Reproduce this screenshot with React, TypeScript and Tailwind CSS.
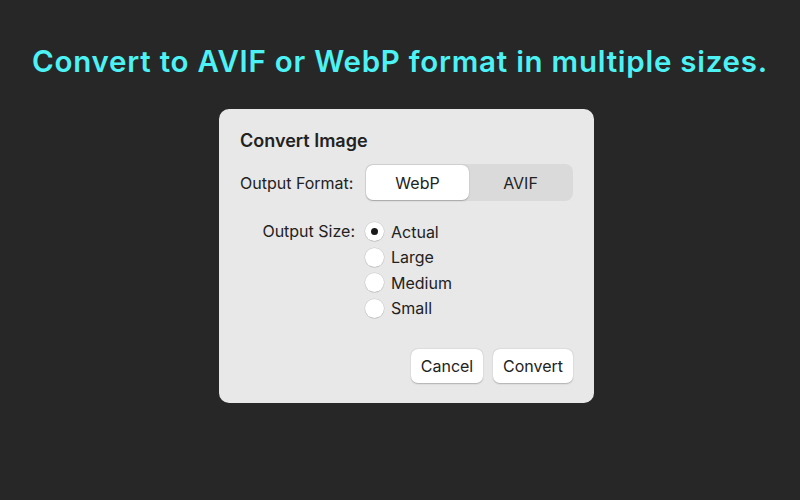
import { useState } from "react";

const sizes = ["Actual", "Large", "Medium", "Small"];

export default function App() {
  const [format, setFormat] = useState<"WebP" | "AVIF">("WebP");
  const [size, setSize] = useState("Actual");

  return (
    <div
      className="w-[800px] h-[500px] bg-[#272727] flex flex-col items-center overflow-hidden"
      style={{ fontFamily: "Inter, 'Liberation Sans', sans-serif" }}
    >
      <h1 className="mt-[42px] text-[29.5px] leading-[38px] font-semibold text-[#4cf2f4] tracking-[0.75px]">
        Convert to AVIF or WebP format in multiple sizes.
      </h1>

      {/* Dialog */}
      <div className="mt-[29px] ml-[13px] w-[375px] h-[294px] bg-[#e8e8e8] rounded-[10px] px-[21px] pt-[19px] flex flex-col">
        <h2 className="text-[18px] leading-[26px] font-semibold text-[#222]">Convert Image</h2>

        <div className="mt-[10px] flex items-center">
          <span className="w-[125px] text-[16px] text-[#222]">Output Format:</span>
          <div className="flex w-[208px] h-[37px] p-[1px] rounded-[8px] bg-[#dadada]">
            {(["WebP", "AVIF"] as const).map((f) => (
              <button
                key={f}
                onClick={() => setFormat(f)}
                className={`flex-1 rounded-[7px] text-[16px] text-[#222] ${
                  format === f ? "bg-white shadow-[0_0.5px_1.5px_rgba(0,0,0,0.25)]" : ""
                }`}
              >
                {f}
              </button>
            ))}
          </div>
        </div>

        <div className="mt-[18px] flex">
          <span className="w-[125px] pr-[10px] text-right text-[16px] leading-[25.5px] text-[#222]">
            Output Size:
          </span>
          <div className="flex flex-col">
            {sizes.map((s) => (
              <label
                key={s}
                onClick={() => setSize(s)}
                className="flex items-center h-[25.5px] cursor-default"
              >
                <span className="w-[19px] h-[19px] rounded-full bg-white shadow-[0_0_0_0.5px_rgba(0,0,0,0.12),0_0.5px_1px_rgba(0,0,0,0.15)] flex items-center justify-center">
                  {size === s && <span className="w-[7px] h-[7px] rounded-full bg-[#1a1a1a]" />}
                </span>
                <span className="ml-[7px] text-[16px] text-[#222]">{s}</span>
              </label>
            ))}
          </div>
        </div>

        <div className="mt-auto mb-[20px] flex justify-end gap-[10px]">
          <button className="h-[34px] w-[72px] rounded-[7px] bg-white text-[16px] text-[#222] shadow-[0_0.5px_1.5px_rgba(0,0,0,0.25)]">
            Cancel
          </button>
          <button className="h-[34px] w-[80px] rounded-[7px] bg-white text-[16px] text-[#222] shadow-[0_0.5px_1.5px_rgba(0,0,0,0.25)]">
            Convert
          </button>
        </div>
      </div>
    </div>
  );
}
